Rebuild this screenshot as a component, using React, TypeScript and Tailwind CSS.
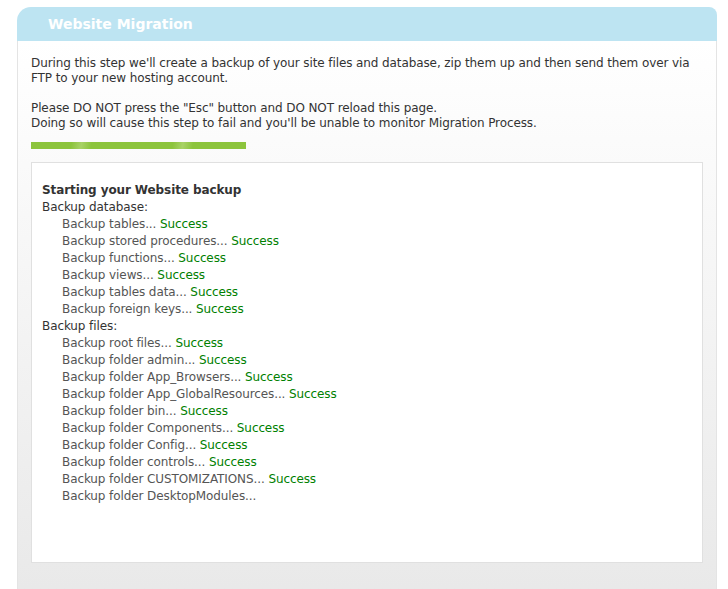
export default function App() {
  const db = ["tables", "stored procedures", "functions", "views", "tables data", "foreign keys"];
  const files = ["root files", "folder admin", "folder App_Browsers", "folder App_GlobalResources", "folder bin", "folder Components", "folder Config", "folder controls", "folder CUSTOMIZATIONS"];
  const Row = ({ t, ok = true }: { t: string; ok?: boolean }) => (
    <div className="pl-[20px] text-[#555]">
      Backup {t}...{ok && <span className="text-[#008000]"> Success</span>}
    </div>
  );
  return (
    <div className="w-[728px] h-[589px] bg-white pt-[7px] pl-[17px] overflow-hidden" style={{ fontFamily: "'DejaVu Sans', Verdana, sans-serif" }}>
      <div className="w-[700px] h-[582px] flex flex-col">
        <div className="h-[34px] bg-[#bde4f2] rounded-tl-[14px] rounded-tr-[8px] pl-[31px] flex items-center text-white font-bold text-[14px]">
          Website Migration
        </div>
        <div className="flex-1 border-x border-[#e4e4e4] bg-gradient-to-b from-white to-[#e9e9e9] px-[13px] pt-[15px] text-[12px] leading-[15px] text-[#333] tracking-[-0.1px]">
          <p>During this step we'll create a backup of your site files and database, zip them up and then send them over via FTP to your new hosting account.</p>
          <p className="mt-[15px]">Please DO NOT press the "Esc" button and DO NOT reload this page.<br />Doing so will cause this step to fail and you'll be unable to monitor Migration Process.</p>
          <div className="mt-[11px] w-[215px] h-[7px]" style={{ background: "repeating-linear-gradient(100deg,#8cc43c 0 40px,#a8d266 50px,#8cc43c 60px 100px)" }} />
          <div className="mt-[13px] h-[401px] bg-white border border-[#e0e0e0] pl-[10px] pt-[19px] leading-[17px]">
            <div className="font-bold">Starting your Website backup</div>
            <div>Backup database:</div>
            {db.map((t) => <Row key={t} t={t} />)}
            <div>Backup files:</div>
            {files.map((t) => <Row key={t} t={t} />)}
            <Row t="folder DesktopModules" ok={false} />
          </div>
        </div>
      </div>
    </div>
  );
}
